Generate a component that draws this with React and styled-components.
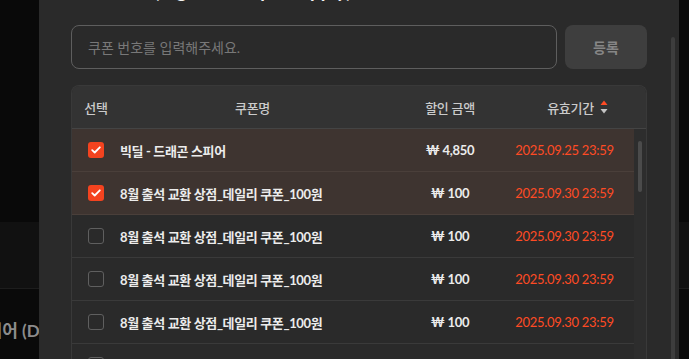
import { useState } from 'react';
import styled, { createGlobalStyle } from 'styled-components';

const coupons = [
  { id: 1, name: '빅딜 - 드래곤 스피어', amount: '₩ 4,850', expires: '2025.09.25 23:59', checked: true },
  { id: 2, name: '8월 출석 교환 상점_데일리 쿠폰_100원', amount: '₩ 100', expires: '2025.09.30 23:59', checked: true },
  { id: 3, name: '8월 출석 교환 상점_데일리 쿠폰_100원', amount: '₩ 100', expires: '2025.09.30 23:59', checked: false },
  { id: 4, name: '8월 출석 교환 상점_데일리 쿠폰_100원', amount: '₩ 100', expires: '2025.09.30 23:59', checked: false },
  { id: 5, name: '8월 출석 교환 상점_데일리 쿠폰_100원', amount: '₩ 100', expires: '2025.09.30 23:59', checked: false },
  { id: 6, name: '8월 출석 교환 상점_데일리 쿠폰_100원', amount: '₩ 100', expires: '2025.09.30 23:59', checked: false },
];

const App = () => {
  const [items, setItems] = useState(coupons);

  const toggle = (id) => {
    setItems(items.map(item => (item.id === id ? { ...item, checked: !item.checked } : item)));
  };

  return (
    <>
      <GlobalStyle />
      <Page>
        <PageTop />
        <PageBand />
        <ProductInfo>
          <ProductTitle>드래곤 스피어 (Dragon Spear)</ProductTitle>
          <ProductPrice>14,999 원</ProductPrice>
        </ProductInfo>
      </Page>

      <Modal>
        <ModalScroll />
        <ModalBody>
          <TitleRow>
            <Title>쿠폰 선택 (Bigdeal Coupon Apply)</Title>
            <CloseButton aria-label="close">
              <svg width="18" height="18" viewBox="0 0 18 18" fill="none">
                <path d="M3 3l12 12M15 3L3 15" stroke="#e0e0e0" strokeWidth="2" strokeLinecap="round" />
              </svg>
            </CloseButton>
          </TitleRow>

          <InputRow>
            <CouponInput placeholder="쿠폰 번호를 입력해주세요." />
            <RegisterButton>등록</RegisterButton>
          </InputRow>

          <Table>
            <HeaderRow>
              <HeadCell>선택</HeadCell>
              <HeadCell>쿠폰명</HeadCell>
              <HeadCell>할인 금액</HeadCell>
              <HeadCell $pad>
                유효기간
                <SortIcon width="8" height="14" viewBox="0 0 8 14">
                  <path d="M4 0.5L7.5 5H0.5z" fill="#ff4b24" />
                  <path d="M4 13.5L0.5 9H7.5z" fill="#c4c4c4" />
                </SortIcon>
              </HeadCell>
            </HeaderRow>

            <Body>
              <Rows>
                {items.map(item => (
                  <Row key={item.id} $selected={item.checked}>
                    <Cell>
                      <Checkbox $checked={item.checked} onClick={() => toggle(item.id)}>
                        {item.checked && (
                          <svg width="10" height="8" viewBox="0 0 10 8" fill="none">
                            <path d="M1.2 4.1l2.5 2.4L8.8 1.3" stroke="#fff" strokeWidth="1.8" strokeLinecap="round" strokeLinejoin="round" />
                          </svg>
                        )}
                      </Checkbox>
                    </Cell>
                    <Name>{item.name}</Name>
                    <Amount>{item.amount}</Amount>
                    <Expires>{item.expires}</Expires>
                  </Row>
                ))}
              </Rows>
              <Track>
                <Thumb />
              </Track>
            </Body>
          </Table>
        </ModalBody>
      </Modal>
    </>
  );
};

const GlobalStyle = createGlobalStyle`
  * { box-sizing: border-box; }
  html, body {
    margin: 0;
    height: 100%;
    background: #0a0a0a;
    font-family: "Lato", "Noto Sans CJK KR", sans-serif;
    overflow: hidden;
  }
`;

const Page = styled.div`
  display: flex;
  flex-direction: column;
  height: 100vh;
  overflow: hidden;
  background: #0a0a0a;
`;

const PageTop = styled.div`
  flex-shrink: 0;
  height: 222px;
  background: #090909;
`;

const PageBand = styled.div`
  flex-shrink: 0;
  height: 67px;
  background: #111;
  border-bottom: 1px solid #1d1d1d;
`;

const ProductInfo = styled.div`
  flex-shrink: 0;
  display: flex;
  flex-direction: column;
  gap: 6px;
  padding-top: 28px;
  margin-left: -80px;
`;

const ProductTitle = styled.div`
  font-size: 17px;
  font-weight: 700;
  color: #8c8c8c;
  white-space: nowrap;
`;

const ProductPrice = styled.div`
  font-size: 14px;
  color: #6c6c6c;
  white-space: nowrap;
`;

const Modal = styled.div`
  position: fixed;
  top: 0;
  left: 39px;
  width: 640px;
  height: 100vh;
  background: #2a2a2a;
  overflow: hidden;
`;

const ModalScroll = styled.div`
  position: absolute;
  top: 37px;
  right: 4px;
  bottom: -10px;
  width: 4px;
  border-radius: 2px;
  background: #3d3d3d;
`;

const ModalBody = styled.div`
  display: flex;
  flex-direction: column;
  padding: 0 32px;
  margin-top: -23px;
`;

const TitleRow = styled.div`
  display: flex;
  justify-content: space-between;
  align-items: center;
  height: 28px;
  margin-bottom: 20px;
`;

const Title = styled.h2`
  margin: 0 0 0 4px;
  font-size: 19px;
  font-weight: 700;
  color: #f2f2f2;
  line-height: 28px;
`;

const CloseButton = styled.button`
  display: flex;
  background: none;
  border: none;
  padding: 0;
  margin-right: 6px;
  cursor: pointer;
`;

const InputRow = styled.div`
  display: flex;
  gap: 8px;
  margin-bottom: 16px;
`;

const CouponInput = styled.input`
  flex: 1;
  height: 44px;
  padding: 0 16px;
  border: 1px solid #5e5e5e;
  border-radius: 8px;
  background: transparent;
  font-family: inherit;
  font-size: 14px;
  color: #ddd;
  outline: none;

  &::placeholder {
    color: #787878;
  }
`;

const RegisterButton = styled.button`
  width: 82px;
  height: 44px;
  border: none;
  border-radius: 8px;
  background: #3e3e3e;
  font-family: inherit;
  font-size: 14px;
  font-weight: 700;
  color: #868686;
  cursor: pointer;
`;

const Table = styled.div`
  border: 1px solid #393939;
  border-bottom: none;
  border-radius: 8px 8px 0 0;
  overflow: hidden;
`;

const columns = '48px 265px 130px 1fr';

const HeaderRow = styled.div`
  display: grid;
  grid-template-columns: ${columns};
  height: 43px;
  background: #333;
  border-bottom: 1px solid #444;
`;

const HeadCell = styled.div`
  display: flex;
  align-items: center;
  justify-content: center;
  gap: 6px;
  padding-right: ${p => (p.$pad ? '6px' : '0')};
  font-size: 13px;
  font-weight: 500;
  color: #cbcbcb;
  letter-spacing: -0.3px;
`;

const SortIcon = styled.svg`
  display: block;
`;

const Body = styled.div`
  display: flex;
`;

const Rows = styled.div`
  flex: 1;
  display: flex;
  flex-direction: column;
`;

const Row = styled.div`
  display: grid;
  grid-template-columns: ${columns};
  height: 43px;
  border-bottom: 1px solid ${p => (p.$selected ? '#4a3f3a' : '#3a3a3a')};
  background: ${p => (p.$selected ? '#3e3430' : '#2a2a2a')};
`;

const Cell = styled.div`
  display: flex;
  align-items: center;
  justify-content: center;
`;

const Checkbox = styled.div`
  display: flex;
  align-items: center;
  justify-content: center;
  width: 16px;
  height: 16px;
  border-radius: 3px;
  background: ${p => (p.$checked ? '#f4431f' : 'transparent')};
  border: ${p => (p.$checked ? 'none' : '1.5px solid #5f5f5f')};
  cursor: pointer;
`;

const Name = styled.div`
  display: flex;
  align-items: center;
  font-size: 13px;
  font-weight: 700;
  color: #ececec;
  letter-spacing: -0.35px;
  white-space: nowrap;
`;

const Amount = styled.div`
  display: flex;
  align-items: center;
  justify-content: center;
  font-size: 13px;
  font-weight: 700;
  color: #ececec;
  letter-spacing: -0.3px;
  white-space: nowrap;
`;

const Expires = styled.div`
  display: flex;
  align-items: center;
  justify-content: center;
  padding-right: 20px;
  font-size: 13px;
  color: #ff4b24;
  letter-spacing: -0.3px;
  white-space: nowrap;
`;

const Track = styled.div`
  width: 12px;
  background: #2d2d2d;
  display: flex;
  justify-content: center;
`;

const Thumb = styled.div`
  width: 4px;
  height: 51px;
  margin-top: 12px;
  border-radius: 2px;
  background: #4b4b4b;
`;

export default App;
